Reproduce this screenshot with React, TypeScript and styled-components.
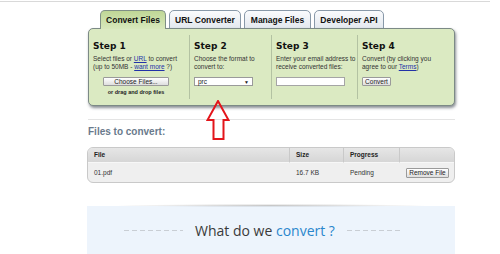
import React from 'react';
import styled, {createGlobalStyle} from 'styled-components';

const GlobalStyle = createGlobalStyle`
    html, body {
        margin: 0;
        padding: 0;
        background: #ffffff;
        font-family: 'Liberation Sans', Arial, sans-serif;
        color: #222;
    }
`;

const TopRule = styled.div`
    height: 1px;
    margin: 1px 10px 0 0;
    background: #d9d9d9;
`;

const Main = styled.main`
    position: relative;
    width: 368px;
    margin-left: 87px;
`;

const Tabs = styled.nav`
    display: flex;
    gap: 3px;
    margin-top: 8px;
    padding-left: 13px;
`;

const Tab = styled.div<{active?: boolean; w: number}>`
    position: relative;
    z-index: ${({active}) => (active ? 2 : 0)};
    width: ${({w}) => w}px;
    height: 19px;
    margin-bottom: -1px;
    box-sizing: border-box;
    border: 1px solid ${({active}) => (active ? '#7f8f86' : '#8898a8')};
    border-bottom: ${({active}) => (active ? 'none' : '1px solid #8898a8')};
    border-radius: 5px 5px 0 0;
    background: ${({active}) =>
        active
            ? 'linear-gradient(#bfd796, #d8e8bc)'
            : 'linear-gradient(#fafbfd, #e3e8ee)'};
    font-size: 8.5px;
    font-weight: bold;
    line-height: 19px;
    text-align: center;
    color: #111;
    white-space: nowrap;
`;

const Panel = styled.section`
    position: relative;
    z-index: 1;
    display: grid;
    grid-template-columns: 100px 82px 86px 1fr;
    height: 78px;
    box-sizing: border-box;
    margin-left: 1px;
    border: 1px solid #7c8a86;
    border-radius: 5px;
    background: #dbeac2;
    box-shadow: 1px 2px 3px rgba(40, 50, 60, 0.55);
`;

const Step = styled.div<{divided?: boolean}>`
    display: flex;
    flex-direction: column;
    align-items: flex-start;
    margin: 6px 0;
    padding: 5px 4px 0 4px;
    border-left: ${({divided}) => (divided ? '1px solid #b3c2a2' : 'none')};
`;

const StepTitle = styled.h3`
    margin: 0;
    font-family: 'DejaVu Sans', Verdana, sans-serif;
    font-size: 9px;
    font-weight: bold;
    line-height: 12px;
    color: #111;
`;

const StepText = styled.p`
    margin: 3px 0 0;
    font-size: 6.5px;
    line-height: 8px;
    color: #333;
    white-space: nowrap;
`;

const Link = styled.a`
    color: #2232a8;
    text-decoration: underline;
`;

const Centered = styled.div`
    align-self: stretch;
    display: flex;
    flex-direction: column;
    align-items: center;
    padding-right: 6px;
`;

const Button = styled.button<{w: number}>`
    width: ${({w}) => w}px;
    height: 9px;
    margin-top: 6px;
    padding: 0;
    border: 1px solid #9a9a9a;
    border-radius: 1px;
    background: linear-gradient(#ffffff, #dedede);
    font-family: 'Liberation Sans', Arial, sans-serif;
    font-size: 6.5px;
    line-height: 7px;
    color: #222;
`;

const DropHint = styled.div`
    margin-top: 3px;
    font-size: 5.5px;
    font-weight: bold;
    line-height: 7px;
    color: #222;
`;

const Select = styled.div`
    display: flex;
    justify-content: space-between;
    align-items: center;
    width: 59px;
    height: 9px;
    margin-top: 6px;
    padding: 0 3px;
    box-sizing: border-box;
    border: 1px solid #9a9a9a;
    background: #fff;
    font-size: 6.5px;
    color: #222;

    span:last-child {
        font-size: 5px;
    }
`;

const Input = styled.div`
    width: 69px;
    height: 9px;
    margin-top: 6px;
    box-sizing: border-box;
    border: 1px solid #a5a5a5;
    background: #fff;
`;

const Arrow = styled.svg`
    position: absolute;
    z-index: 3;
    left: 119px;
    top: 90px;
`;

const Rule = styled.div`
    height: 1px;
    margin: 13px 0 0 1px;
    background: #e4e4e4;
`;

const SectionTitle = styled.h2`
    margin: 6px 0 0 1px;
    font-size: 10px;
    font-weight: bold;
    line-height: 12px;
    color: #6a7a8c;
`;

const Table = styled.div`
    display: grid;
    grid-template-columns: 202px 54px 56px 1fr;
    margin-top: 9px;
    border: 1px solid #c9c9c9;
    border-radius: 6px;
    overflow: hidden;
    background: #efefef;
`;

const HeadCell = styled.div<{last?: boolean}>`
    height: 14px;
    padding-left: 6px;
    border-right: ${({last}) => (last ? 'none' : '1px solid #c9c9c9')};
    border-bottom: 1px solid #f7f7f7;
    background: linear-gradient(#e6e6e6, #d6d6d6);
    font-size: 6.5px;
    font-weight: bold;
    line-height: 14px;
    color: #222;
`;

const Cell = styled.div<{end?: boolean}>`
    display: flex;
    align-items: center;
    justify-content: ${({end}) => (end ? 'flex-end' : 'flex-start')};
    height: 19px;
    padding: 0 ${({end}) => (end ? '5px' : '0')} 0 6px;
    font-size: 6.5px;
    color: #333;
`;

const SmallButton = styled(Button)`
    margin-top: 0;
    height: 10px;
`;

const Showcase = styled.section`
    position: relative;
    height: 60px;
    margin-top: 23px;
    padding: 15px 16px 0 0;
    box-sizing: border-box;
    display: flex;
    justify-content: center;
    background: #edf4fc;

    &::before {
        content: '';
        position: absolute;
        left: 30px;
        right: 30px;
        top: -2px;
        height: 3px;
        border-radius: 50%;
        background: radial-gradient(ellipse at center, rgba(0, 0, 0, 0.22), rgba(0, 0, 0, 0) 72%);
    }
`;

const ShowcaseTitle = styled.div`
    display: flex;
    align-items: center;
    gap: 12px;
    height: 18px;
    font-family: 'Open Sans', 'Liberation Sans', sans-serif;
    font-size: 14px;
    color: #3a3a3a;

    em {
        font-style: normal;
        color: #2a86cc;
    }
`;

const Dashes = styled.span<{w: number}>`
    display: block;
    width: ${({w}) => w}px;
    height: 1px;
    background: repeating-linear-gradient(90deg, #c9ced4 0 5px, transparent 5px 8px);
`;

export default function App() {
    return (
        <>
            <GlobalStyle />
            <TopRule />
            <Main>
                <Tabs>
                    <Tab active w={66}>Convert Files</Tab>
                    <Tab w={72}>URL Converter</Tab>
                    <Tab w={67}>Manage Files</Tab>
                    <Tab w={70}>Developer API</Tab>
                </Tabs>
                <Panel>
                    <Step>
                        <StepTitle>Step 1</StepTitle>
                        <StepText>
                            Select files or <Link>URL</Link> to convert
                            <br />
                            (up to 50MB - <Link>want more</Link> ?)
                        </StepText>
                        <Centered>
                            <Button w={66}>Choose Files...</Button>
                            <DropHint>or drag and drop files</DropHint>
                        </Centered>
                    </Step>
                    <Step divided>
                        <StepTitle>Step 2</StepTitle>
                        <StepText>
                            Choose the format to
                            <br />
                            convert to:
                        </StepText>
                        <Select>
                            <span>prc</span>
                            <span>▼</span>
                        </Select>
                    </Step>
                    <Step divided>
                        <StepTitle>Step 3</StepTitle>
                        <StepText>
                            Enter your email address to
                            <br />
                            receive converted files:
                        </StepText>
                        <Input />
                    </Step>
                    <Step divided>
                        <StepTitle>Step 4</StepTitle>
                        <StepText>
                            Convert (by clicking you
                            <br />
                            agree to our <Link>Terms</Link>)
                        </StepText>
                        <Button w={29}>Convert</Button>
                    </Step>
                </Panel>
                <Arrow width='24' height='40' viewBox='0 0 24 40'>
                    <polygon
                        points='12,1 22.5,20 17.5,20 17.5,39 7.5,39 7.5,20 1.5,20'
                        fill='none'
                        stroke='#e3151b'
                        strokeWidth='2'
                        strokeLinejoin='miter'
                    />
                </Arrow>
                <Rule />
                <SectionTitle>Files to convert:</SectionTitle>
                <Table>
                    <HeadCell>File</HeadCell>
                    <HeadCell>Size</HeadCell>
                    <HeadCell>Progress</HeadCell>
                    <HeadCell last />
                    <Cell>01.pdf</Cell>
                    <Cell>16.7 KB</Cell>
                    <Cell>Pending</Cell>
                    <Cell end>
                        <SmallButton w={43}>Remove File</SmallButton>
                    </Cell>
                </Table>
                <Showcase>
                    <ShowcaseTitle>
                        <Dashes w={59} />
                        <span>
                            What do we <em>convert ?</em>
                        </span>
                        <Dashes w={55} />
                    </ShowcaseTitle>
                </Showcase>
            </Main>
        </>
    );
}
